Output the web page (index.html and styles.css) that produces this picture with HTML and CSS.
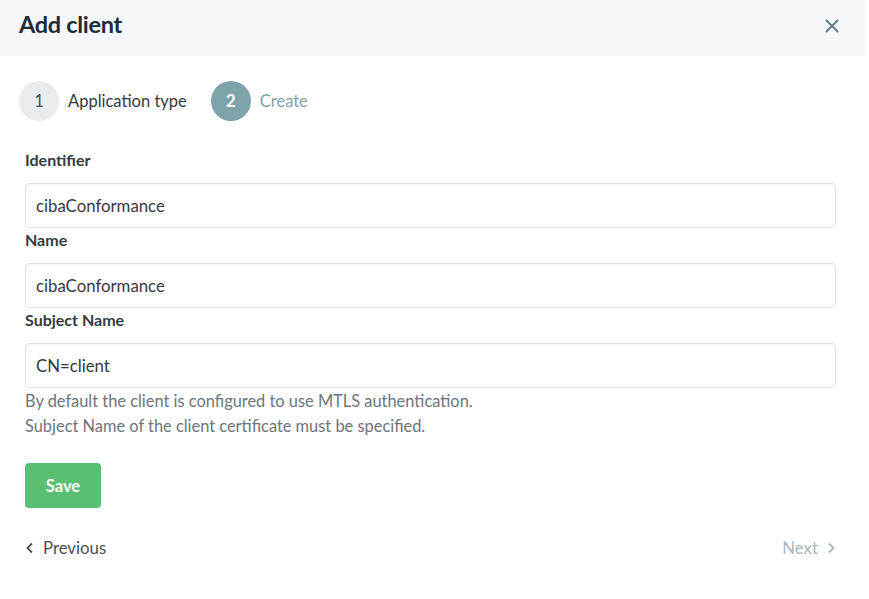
FILE: index.html
```html
<!DOCTYPE html>
<html>
<head>
<meta charset="utf-8">
<link rel="stylesheet" href="styles.css">
</head>
<body>
<div class="modal">
  <div class="header">
    <h1 class="title">Add client</h1>
    <button class="close" aria-label="Close">
      <svg width="16" height="16" viewBox="0 0 16 16"><path d="M2 2 L14 14 M14 2 L2 14" stroke="#5b7b8f" stroke-width="1.8" fill="none"/></svg>
    </button>
  </div>
  <div class="body">
    <div class="steps">
      <div class="step">
        <span class="circle done">1</span>
        <span class="step-label">Application type</span>
      </div>
      <div class="step">
        <span class="circle active">2</span>
        <span class="step-label active-label">Create</span>
      </div>
    </div>
    <form class="form">
      <label class="label">Identifier</label>
      <div class="input">cibaConformance</div>
      <label class="label">Name</label>
      <div class="input">cibaConformance</div>
      <label class="label">Subject Name</label>
      <div class="input">CN=client</div>
      <p class="help">By default the client is configured to use MTLS authentication.<br>Subject Name of the client certificate must be specified.</p>
      <button type="button" class="save">Save</button>
    </form>
    <div class="nav">
      <span class="prev">
        <svg width="10" height="12" viewBox="0 0 10 12"><path d="M7 1.5 L2.5 6 L7 10.5" stroke="#495057" stroke-width="1.8" fill="none"/></svg>
        Previous
      </span>
      <span class="next">
        Next
        <svg width="10" height="12" viewBox="0 0 10 12"><path d="M3 1.5 L7.5 6 L3 10.5" stroke="#adb5bd" stroke-width="1.8" fill="none"/></svg>
      </span>
    </div>
  </div>
</div>
</body>
</html>
```
FILE: styles.css
```css
* { box-sizing: border-box; }
body {
  margin: 0;
  background: #fff;
  font-family: "Lato", "Liberation Sans", sans-serif;
  color: #343a40;
}
.modal { width: 865px; }
.header {
  height: 56px;
  background: #f5f7fa;
  display: flex;
  align-items: center;
  justify-content: space-between;
  padding: 0 25px 8px 19px;
}
.title {
  margin: 0;
  font-size: 23.5px;
  font-weight: 700;
  color: #212b36;
  letter-spacing: -0.3px;
}
.close {
  border: 0;
  background: none;
  padding: 0;
  width: 16px;
  height: 16px;
  display: flex;
  margin-top: 4px;
}
.body { padding: 25px 29px 0 19px; }
.steps { display: flex; gap: 24px; align-items: center; }
.step { display: flex; align-items: center; gap: 9px; }
.circle {
  width: 40px; height: 40px; border-radius: 50%;
  display: flex; align-items: center; justify-content: center;
  font-size: 16.5px;
}
.circle.done { background: #e9ecef; color: #495057; }
.circle.active { background: #7ea3a9; color: #fff; font-weight: 700; }
.step-label { font-size: 16.5px; color: #343a40; }
.active-label { color: #7ea3a9; }
.form { padding: 27px 0 0 6px; display: flex; flex-direction: column; align-items: flex-start; }
.label { font-size: 16px; font-weight: 700; color: #343a40; height: 23px; line-height: 23px; margin-bottom: 12px; }
.input {
  width: 100%;
  height: 45px;
  border: 1px solid #dee2e6;
  border-radius: 4px;
  box-shadow: inset 0 2px 3px rgba(0,0,0,0.04);
  padding: 0 10px;
  display: flex; align-items: center;
  font-size: 16.8px;
  color: #343a40;
}
.help { margin: 0; font-size: 16.4px; line-height: 25px; color: #6c757d; }
.save {
  margin-top: 25px;
  width: 76px; height: 45px;
  border: 0; border-radius: 4px;
  background: #5bbf73;
  color: #fff; font-weight: 700; font-size: 16.5px;
  font-family: inherit;
}
.nav {
  display: flex; justify-content: space-between; align-items: center;
  padding: 29px 0 0 6px;
  font-size: 16.8px;
}
.prev { color: #495057; display: flex; align-items: center; gap: 8px; }
.next { color: #adb5bd; display: flex; align-items: center; gap: 8px; }
```
